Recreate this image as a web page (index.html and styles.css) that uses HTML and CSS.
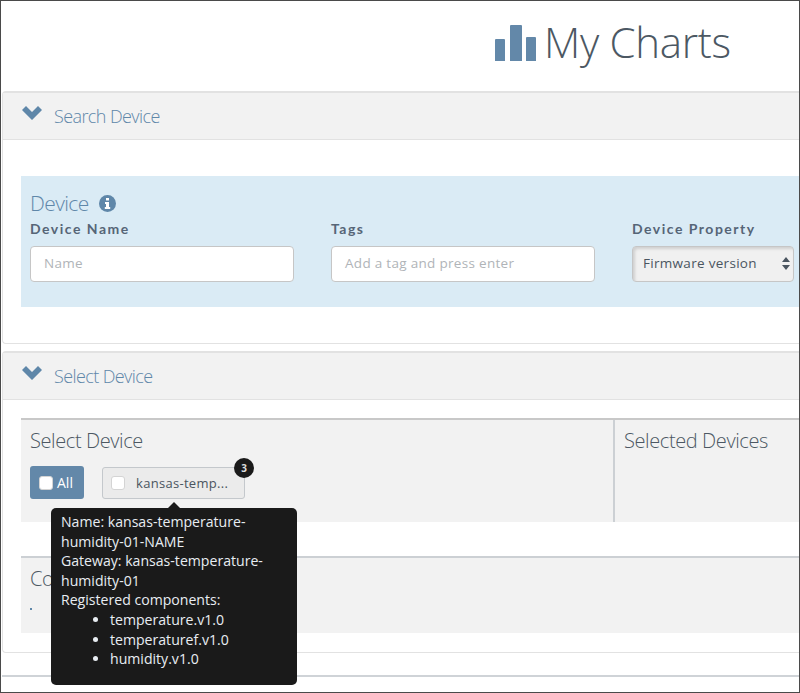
FILE: index.html
```html
<!DOCTYPE html>
<html lang="en">
<head>
    <meta charset="UTF-8">
    <title>My Charts</title>
    <link rel="stylesheet" href="styles.css">
</head>
<body>
    <div id="wrap">
        <h1 class="title">
            <svg class="title-icon" width="41" height="36" viewBox="0 0 41 36"><path fill="#6388a9" d="M0 15a1 1 0 0 1 1-1h8a1 1 0 0 1 1 1v21H0zM15 1a1 1 0 0 1 1-1h10a1 1 0 0 1 1 1v35H15zM31 13a1 1 0 0 1 1-1h8a1 1 0 0 1 1 1v23H31z"/></svg>
            My Charts
        </h1>

        <div class="panel panel-search">
            <div class="panel-head">
                <svg class="chev" width="20" height="14" viewBox="0 0 20 14"><path fill="#5f87a9" d="M0 4l4-4 6 6 6-6 4 4-10 10z"/></svg>
                Search Device
            </div>
            <div class="panel-body">
                <div class="device-box">
                    <h2 class="device-title">Device
                        <svg class="info" width="17" height="17" viewBox="0 0 17 17"><circle cx="8.5" cy="8.5" r="8.5" fill="#5f87a9"/><path fill="#fff" d="M7 3h3v2.4H7zM6 7h4v5h1.2v2H5.8v-2H7V9H6z"/></svg>
                    </h2>
                    <div class="fields">
                        <div class="field">
                            <label>Device Name</label>
                            <div class="input">Name</div>
                        </div>
                        <div class="field">
                            <label>Tags</label>
                            <div class="input">Add a tag and press enter</div>
                        </div>
                        <div class="field field-select">
                            <label>Device Property</label>
                            <div class="select">Firmware version
                                <svg width="8" height="13" viewBox="0 0 8 13"><path fill="#4a5560" d="M4 0l4 5H0zM0 8h8l-4 5z"/></svg>
                            </div>
                        </div>
                    </div>
                </div>
            </div>
        </div>

        <div class="panel panel-select">
            <div class="panel-head">
                <svg class="chev" width="20" height="14" viewBox="0 0 20 14"><path fill="#5f87a9" d="M0 4l4-4 6 6 6-6 4 4-10 10z"/></svg>
                Select Device
            </div>
            <div class="panel-body">
                <div class="select-grid">
                    <div class="col-left">
                        <h3>Select Device</h3>
                        <div class="btn-row">
                            <div class="btn-all"><span class="check"></span>All</div>
                            <div class="btn-device"><span class="check"></span>kansas-temp...
                                <span class="badge">3</span>
                                <div class="tip">
                                    Name: kansas-temperature-humidity-01-NAME<br>
                                    Gateway: kansas-temperature-humidity-01<br>
                                    Registered components:
                                    <ul>
                                        <li>temperature.v1.0</li>
                                        <li>temperaturef.v1.0</li>
                                        <li>humidity.v1.0</li>
                                    </ul>
                                </div>
                            </div>
                        </div>
                    </div>
                    <div class="col-right">
                        <h3>Selected Devices</h3>
                    </div>
                </div>
                <div class="comp-box">
                    <h3>Components</h3>
                    <div class="dot"></div>
                </div>
            </div>
        </div>

        <div class="bottom-line"></div>
    </div>
</body>
</html>
```

FILE: styles.css
```css
*{
    box-sizing: border-box;
}
html,body{
    margin: 0;
    padding: 0;
}
body{
    font-family: "Open Sans", sans-serif;
    color: #4a5560;
    background: #fff;
}
#wrap{
    height: 693px;
    overflow: hidden;
    border: 1px solid #4a4a4a;
    background: #fff;
}
.title{
    display: flex;
    align-items: center;
    height: 90px;
    margin: 0;
    padding: 0 0 8px 494px;
    font-size: 42px;
    line-height: 50px;
    font-weight: 300;
    color: #4c5863;
    letter-spacing: -0.3px;
}
.title-icon{
    margin: 1px 8px 0 0;
}
.panel{
    border: 1px solid #e2e2e2;
    border-top-width: 2px;
    border-right: none;
    border-radius: 4px 0 0 4px;
    margin-left: 1px;
}
.panel-search{
    height: 253px;
}
.panel-select{
    height: 302px;
    margin-top: 7px;
}
.panel-head{
    display: flex;
    align-items: center;
    height: 47px;
    padding-left: 19px;
    background: #f2f2f2;
    border-bottom: 1px solid #e2e2e2;
    font-size: 18px;
    font-weight: 300;
    letter-spacing: -0.6px;
    color: #5f87a9;
}
.chev{
    margin: -6px 12px 0 0;
}
.panel-body{
    padding: 36px 0 0 18px;
}
.panel-select .panel-body{
    padding-top: 18px;
}
.device-box{
    height: 131px;
    padding: 13px 0 0 9px;
    background: #daebf5;
}
.device-title{
    margin: 0;
    font-size: 21px;
    line-height: 28px;
    font-weight: 300;
    letter-spacing: -0.6px;
    color: #5f87a9;
}
.info{
    margin-left: 5px;
    vertical-align: -1px;
}
.fields{
    display: flex;
    gap: 37px;
}
.field{
    width: 264px;
}
.field-select{
    width: 162px;
}
.field label{
    display: block;
    height: 29px;
    padding-top: 2px;
    font-family: "Lato", sans-serif;
    font-size: 14px;
    line-height: 20px;
    font-weight: 700;
    letter-spacing: 1.5px;
    color: #566577;
    white-space: nowrap;
}
.input{
    height: 36px;
    padding-left: 13px;
    background: #fff;
    border: 1px solid #c6c6c6;
    border-radius: 4px;
    font-size: 13.5px;
    line-height: 33px;
    letter-spacing: 0.3px;
    color: #b0b4b8;
}
.select{
    display: flex;
    align-items: center;
    justify-content: space-between;
    height: 36px;
    padding: 0 3px 2px 10px;
    background: #f0f0f0;
    border: 1px solid #c6c6c6;
    border-radius: 4px;
    box-shadow: inset 2px 2px 3px #d0d0d0;
    font-size: 13.5px;
    letter-spacing: 0.3px;
    color: #4a5560;
}
.select-grid{
    display: flex;
    height: 104px;
    background: #f2f2f2;
    border-top: 2px solid #c8c8c8;
}
h3{
    margin: 0;
    font-size: 20px;
    line-height: 28px;
    font-weight: 300;
    letter-spacing: -0.4px;
    color: #4c5863;
}
.col-left{
    width: 594px;
    padding: 7px 0 0 9px;
    border-right: 2px solid #ccd0d4;
}
.col-right{
    flex: 1;
    padding: 7px 0 0 9px;
    white-space: nowrap;
}
.btn-row{
    display: flex;
    gap: 18px;
    margin-top: 11px;
}
.btn-all{
    display: flex;
    align-items: center;
    width: 54px;
    height: 33px;
    padding-left: 9px;
    background: #6388a9;
    border-radius: 3px;
    font-size: 14px;
    color: #fff;
}
.check{
    width: 14px;
    height: 14px;
    margin-right: 4px;
    background: #fff;
    border: 1px solid #d4d4d4;
    border-radius: 3px;
}
.btn-device{
    position: relative;
    z-index: 2;
    display: flex;
    align-items: center;
    width: 143px;
    height: 32px;
    margin-top: 1px;
    padding-left: 8px;
    background: #ebebeb;
    border: 1px solid #c4c8cc;
    border-radius: 3px;
    font-size: 13px;
    letter-spacing: 0.3px;
    color: #4a5560;
}
.btn-device .check{
    margin-right: 11px;
}
.badge{
    position: absolute;
    top: -10px;
    right: -10px;
    width: 20px;
    height: 20px;
    background: #1a1a1a;
    border-radius: 50%;
    text-align: center;
    font-size: 10px;
    line-height: 20px;
    letter-spacing: 0;
    font-weight: 700;
    color: #ddd;
}
.tip{
    position: absolute;
    top: 40px;
    left: -52px;
    width: 246px;
    height: 177px;
    padding: 4px 10px 0;
    background: #1a1a1a;
    border-radius: 5px;
    font-size: 14.1px;
    line-height: 19.6px;
    letter-spacing: 0;
    color: #e8edf2;
}
.tip::before{
    content: "";
    position: absolute;
    top: -6px;
    left: 117px;
    border: 6px solid transparent;
    border-top: none;
    border-bottom-color: #1a1a1a;
}
.tip ul{
    margin: 0;
    padding-left: 49px;
}
.comp-box{
    height: 77px;
    margin-top: 34px;
    padding: 7px 0 0 9px;
    background: #f2f2f2;
    border-top: 2px solid #ccd0d4;
}
.dot{
    width: 2px;
    height: 2px;
    margin-top: 15px;
    background: #5f87a9;
}
.bottom-line{
    height: 2px;
    margin: 22px 0 0 1px;
    background: #cfd3d7;
}
```
